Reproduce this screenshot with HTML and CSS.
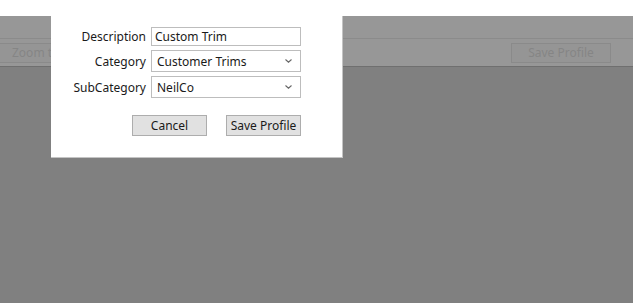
FILE: index.html
```html
<!DOCTYPE html>
<html lang="en">
<head>
    <meta charset="UTF-8">
    <meta name="viewport" content="width=device-width, initial-scale=1.0">
    <title>Save Profile</title>
    <link rel="stylesheet" href="styles.css">
</head>
<body>
    <div class="top-band"></div>
    <div class="app">
        <div class="toolbar">
            <div class="toolbar__title"></div>
            <div class="toolbar__row">
                <button class="toolbar__btn toolbar__btn--zoom">Zoom to Fit</button>
                <button class="toolbar__btn toolbar__btn--save">Save Profile</button>
            </div>
        </div>
        <div class="workspace"></div>

        <div class="dialog" id="dialog">
            <form class="profile-form" id="profile-form">
                <label class="profile-form__label" for="description">Description</label>
                <input class="profile-form__input" id="description" type="text" value="Custom Trim"/>

                <label class="profile-form__label" for="category">Category</label>
                <div class="profile-form__select">
                    <span>Customer Trims</span>
                    <svg width="9" height="6" viewBox="0 0 9 6"><path d="M1.5 1.5 L4.5 4.2 L7.5 1.5" fill="none" stroke="#666" stroke-width="1.1"/></svg>
                </div>

                <label class="profile-form__label" for="subcategory">SubCategory</label>
                <div class="profile-form__select">
                    <span>NeilCo</span>
                    <svg width="9" height="6" viewBox="0 0 9 6"><path d="M1.5 1.5 L4.5 4.2 L7.5 1.5" fill="none" stroke="#666" stroke-width="1.1"/></svg>
                </div>
            </form>
            <div class="dialog__buttons">
                <button class="dialog__btn" type="button">Cancel</button>
                <button class="dialog__btn" type="submit">Save Profile</button>
            </div>
        </div>
    </div>
</body>
</html>
```

FILE: styles.css
```css
body{
    display: flex;
    flex-direction: column;
    height: 100vh;
    margin: 0;
    background-color: #ffffff;
    font-family: "Noto Sans", "Open Sans", sans-serif;
    font-size: 12px;
    overflow: hidden;
}
.top-band{
    flex: 0 0 16px;
    background-color: #ffffff;
}
.app{
    position: relative;
    flex: 1;
    display: flex;
    flex-direction: column;
    background-color: #808080;
}
.toolbar{
    background-color: #979797;
    border-bottom: 1px solid #6f6f6f;
}
.toolbar__title{
    height: 22px;
    border-bottom: 1px solid #8b8b8b;
}
.toolbar__row{
    display: flex;
    justify-content: space-between;
    align-items: center;
    height: 27px;
    padding: 0 22px 0 0;
}
.toolbar__btn{
    height: 20px;
    padding: 0;
    border: 1px solid #8a8a8a;
    background-color: #959595;
    color: #858585;
    font-family: inherit;
    font-size: 12px;
}
.toolbar__btn--zoom{
    width: 88px;
    margin-left: -1px;
    text-align: left;
    padding-left: 12px;
}
.toolbar__btn--save{
    width: 100px;
}
.workspace{
    flex: 1;
}
.dialog{
    position: absolute;
    left: 51px;
    top: 0;
    width: 292px;
    height: 142px;
    box-sizing: border-box;
    padding: 11px 41px 0 0;
    background-color: #ffffff;
    border-right: 1px solid #c4c4c4;
    border-bottom: 1px solid #c4c4c4;
}
.profile-form{
    display: grid;
    grid-template-columns: 95px 150px;
    column-gap: 5px;
    row-gap: 4px;
    align-items: center;
}
.profile-form__label{
    text-align: right;
    color: #1a1a1a;
}
.profile-form__input{
    box-sizing: border-box;
    height: 19px;
    width: 150px;
    margin: 0;
    padding: 0 3px;
    border: 1px solid #bdbdbd;
    outline: 0;
    font-family: inherit;
    font-size: 12px;
    color: #1a1a1a;
}
.profile-form__select{
    box-sizing: border-box;
    display: flex;
    justify-content: space-between;
    align-items: center;
    height: 22px;
    padding: 0 7px 0 5px;
    border: 1px solid #bdbdbd;
    color: #1a1a1a;
}
.dialog__buttons{
    display: flex;
    justify-content: flex-end;
    gap: 19px;
    margin-top: 17px;
}
.dialog__btn{
    box-sizing: border-box;
    width: 75px;
    height: 21px;
    padding: 0;
    border: 1px solid #adadad;
    background-color: #e1e1e1;
    color: #1a1a1a;
    font-family: inherit;
    font-size: 12px;
}
```
